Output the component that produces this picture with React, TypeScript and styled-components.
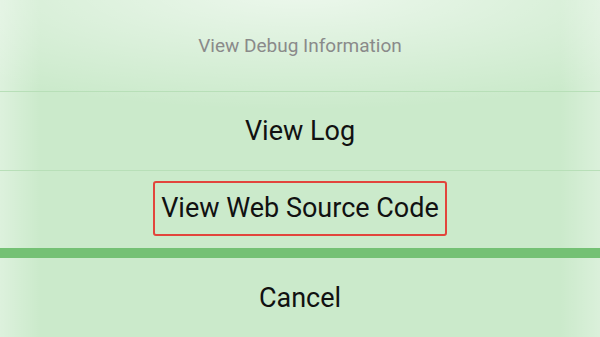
import React from "react";
import styled, { createGlobalStyle } from "styled-components";

const Global = createGlobalStyle`
  html, body { margin: 0; padding: 0; }
  body { width: 600px; height: 337px; overflow: hidden; font-family: Roboto, "Liberation Sans", sans-serif; }
`;

const Sheet = styled.div`
  position: relative;
  width: 600px;
  height: 337px;
  display: flex;
  flex-direction: column;
  background: #cbeacb;
  overflow: hidden;
`;

const Glow = styled.div`
  position: absolute;
  inset: 0;
  pointer-events: none;
  background:
    radial-gradient(ellipse 480px 120px at 50% -10px, rgba(255,255,255,0.65), rgba(255,255,255,0) 100%),
    linear-gradient(to right, rgba(255,255,255,0.35) 0px, rgba(255,255,255,0) 40px, rgba(255,255,255,0) 560px, rgba(255,255,255,0.3) 600px);
`;

const Header = styled.div`
  position: relative;
  height: 91px;
  display: flex;
  align-items: center;
  justify-content: center;
  border-bottom: 1px solid #b8dfb8;
  color: #8a8a8a;
  font-size: 19px;
`;

const Row = styled.div<{ $divider?: boolean }>`
  position: relative;
  height: ${(p) => (p.$divider ? "78px" : "77px")};
  display: flex;
  align-items: center;
  justify-content: center;
  border-bottom: ${(p) => (p.$divider ? "1px solid #b8dfb8" : "none")};
  color: #111;
  font-size: 27px;
`;

const Highlight = styled.span`
  display: inline-flex;
  align-items: center;
  height: 51px;
  padding: 0 6px;
  border: 2px solid #e2453c;
  border-radius: 3px;
  margin-top: -3px;
`;

const GroupGap = styled.div`
  position: relative;
  height: 10px;
  background: #74c174;
`;

const CancelRow = styled.div`
  position: relative;
  flex: 1;
  display: flex;
  align-items: center;
  justify-content: center;
  color: #111;
  font-size: 27px;
`;

export default function App() {
  return (
    <>
      <Global />
      <Sheet>
        <Glow />
        <Header>View Debug Information</Header>
        <Row $divider>View Log</Row>
        <Row>
          <Highlight>View Web Source Code</Highlight>
        </Row>
        <GroupGap />
        <CancelRow>Cancel</CancelRow>
      </Sheet>
    </>
  );
}
